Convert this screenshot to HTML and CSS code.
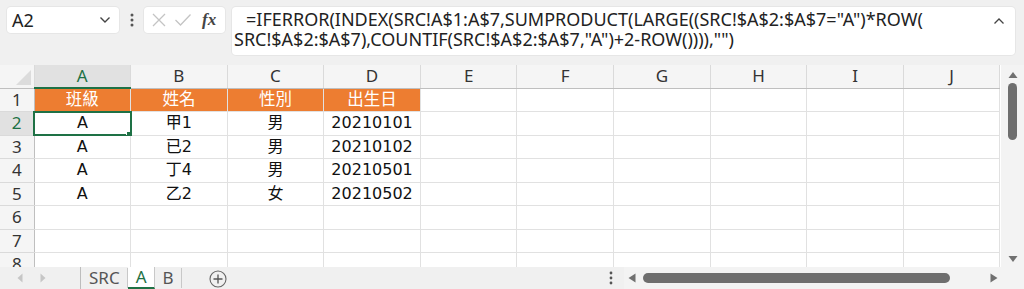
FILE: index.html
```html
<!DOCTYPE html>
<html lang="zh-Hant">
<head>
    <meta charset="UTF-8">
    <meta name="viewport" content="width=device-width, initial-scale=1.0">
    <title>Excel - A</title>
    <link rel="stylesheet" href="styles.css">
</head>
<body>
    <div class="toolbar">
        <div class="namebox">
            <span>A2</span>
            <svg width="12" height="8" viewBox="0 0 12 8"><path d="M1.5 1.5 L6 6 L10.5 1.5" fill="none" stroke="#444" stroke-width="1.4"/></svg>
        </div>
        <div class="grip">
            <svg width="4" height="14" viewBox="0 0 4 14"><circle cx="2" cy="2" r="1.5" fill="#555"/><circle cx="2" cy="7" r="1.5" fill="#555"/><circle cx="2" cy="12" r="1.5" fill="#555"/></svg>
        </div>
        <div class="fxbox">
            <svg width="16" height="16" viewBox="0 0 16 16"><path d="M2 2 L14 14 M14 2 L2 14" stroke="#c4c4c4" stroke-width="1.3"/></svg>
            <svg width="18" height="16" viewBox="0 0 18 16"><path d="M1.5 8 L6.5 13 L16.5 2.5" fill="none" stroke="#c4c4c4" stroke-width="1.3"/></svg>
            <span class="fx">fx</span>
        </div>
        <div class="formula">
            <div class="ftext"><span class="first">=IFERROR(INDEX(SRC!A$1:A$7,SUMPRODUCT(LARGE((SRC!$A$2:$A$7="A")*ROW(</span><br>SRC!$A$2:$A$7),COUNTIF(SRC!$A$2:$A$7,"A")+2-ROW()))),"")</div>
            <svg class="collapse" width="12" height="8" viewBox="0 0 12 8"><path d="M1.5 6.5 L6 2 L10.5 6.5" fill="none" stroke="#444" stroke-width="1.3"/></svg>
        </div>
    </div>

    <div class="sheet">
        <div class="gridwrap">
            <table class="grid">
                <colgroup>
                    <col class="rh"><col><col><col><col><col><col><col><col><col><col>
                </colgroup>
                <tr class="colhead">
                    <th class="corner"><span class="tri"></span></th>
                    <th class="on">A</th><th>B</th><th>C</th><th>D</th><th>E</th>
                    <th>F</th><th>G</th><th>H</th><th>I</th><th>J</th>
                </tr>
                <tr>
                    <th class="num">1</th>
                    <td class="head">班級</td><td class="head">姓名</td><td class="head">性別</td><td class="head">出生日</td>
                    <td></td><td></td><td></td><td></td><td></td><td></td>
                </tr>
                <tr>
                    <th class="num on">2</th>
                    <td class="sel">A</td><td>甲1</td><td>男</td><td>20210101</td>
                    <td></td><td></td><td></td><td></td><td></td><td></td>
                </tr>
                <tr>
                    <th class="num">3</th>
                    <td>A</td><td>已2</td><td>男</td><td>20210102</td>
                    <td></td><td></td><td></td><td></td><td></td><td></td>
                </tr>
                <tr>
                    <th class="num">4</th>
                    <td>A</td><td>丁4</td><td>男</td><td>20210501</td>
                    <td></td><td></td><td></td><td></td><td></td><td></td>
                </tr>
                <tr>
                    <th class="num">5</th>
                    <td>A</td><td>乙2</td><td>女</td><td>20210502</td>
                    <td></td><td></td><td></td><td></td><td></td><td></td>
                </tr>
                <tr>
                    <th class="num">6</th>
                    <td></td><td></td><td></td><td></td><td></td><td></td><td></td><td></td><td></td><td></td>
                </tr>
                <tr>
                    <th class="num">7</th>
                    <td></td><td></td><td></td><td></td><td></td><td></td><td></td><td></td><td></td><td></td>
                </tr>
                <tr>
                    <th class="num">8</th>
                    <td></td><td></td><td></td><td></td><td></td><td></td><td></td><td></td><td></td><td></td>
                </tr>
            </table>
        </div>
        <div class="vscroll">
            <svg width="10" height="8" viewBox="0 0 10 8"><path d="M5 1 L9.5 7 L0.5 7 Z" fill="#707070"/></svg>
            <div class="vthumb"></div>
            <div class="spacer"></div>
            <svg width="10" height="8" viewBox="0 0 10 8"><path d="M0.5 1 L9.5 1 L5 7 Z" fill="#707070"/></svg>
        </div>
    </div>

    <div class="tabbar">
        <div class="nav">
            <svg width="6" height="10" viewBox="0 0 6 10"><path d="M5.5 0.5 L0.5 5 L5.5 9.5 Z" fill="#c6c6c6"/></svg>
            <svg width="6" height="10" viewBox="0 0 6 10"><path d="M0.5 0.5 L5.5 5 L0.5 9.5 Z" fill="#c6c6c6"/></svg>
        </div>
        <div class="tabs">
            <div class="tab">SRC</div>
            <div class="tab active">A</div>
            <div class="tab">B</div>
        </div>
        <div class="addsheet">
            <svg width="18" height="18" viewBox="0 0 18 18"><circle cx="9" cy="9" r="8" fill="none" stroke="#666" stroke-width="1.1"/><path d="M9 4.5 V13.5 M4.5 9 H13.5" stroke="#555" stroke-width="1.3"/></svg>
        </div>
        <div class="hscroll">
            <svg class="hgrip" width="4" height="14" viewBox="0 0 4 14"><circle cx="2" cy="2" r="1.4" fill="#555"/><circle cx="2" cy="7" r="1.4" fill="#555"/><circle cx="2" cy="12" r="1.4" fill="#555"/></svg>
            <div class="htrack">
                <svg width="8" height="10" viewBox="0 0 8 10"><path d="M7.5 0.5 L0.5 5 L7.5 9.5 Z" fill="#707070"/></svg>
                <div class="hthumb"></div>
                <div class="spacer"></div>
                <svg width="8" height="10" viewBox="0 0 8 10"><path d="M0.5 0.5 L7.5 5 L0.5 9.5 Z" fill="#707070"/></svg>
            </div>
        </div>
    </div>
</body>
</html>
```

FILE: styles.css
```css
body {
    margin: 0;
    width: 1024px;
    height: 289px;
    overflow: hidden;
    background-color: #f0f0f0;
    font-family: "Noto Sans", "Noto Sans CJK TC", sans-serif;
    color: #222;
}
.toolbar {
    display: flex;
    align-items: flex-start;
    height: 65px;
    padding: 7px 9px 0 7px;
    box-sizing: border-box;
}
.namebox {
    width: 112px;
    height: 26px;
    box-sizing: border-box;
    background-color: #fff;
    border-radius: 4px;
    box-shadow: 0 0 0 1px #e6e6e6;
    display: flex;
    align-items: center;
    justify-content: space-between;
    padding: 0 8px 0 5px;
    font-size: 18px;
    color: #222;
}
.grip {
    width: 25px;
    height: 26px;
    display: flex;
    align-items: center;
    justify-content: center;
}
.fxbox {
    width: 81px;
    height: 26px;
    box-sizing: border-box;
    background-color: #fff;
    border-radius: 4px;
    box-shadow: 0 0 0 1px #e6e6e6;
    display: flex;
    align-items: center;
    gap: 7px;
    padding-left: 7px;
}
.fx {
    font-family: "Liberation Serif", "DejaVu Serif", serif;
    font-style: italic;
    font-weight: bold;
    font-size: 17px;
    color: #444;
    margin-left: 3px;
}
.formula {
    flex: 1;
    margin-left: 7px;
    height: 48px;
    box-sizing: border-box;
    background-color: #fff;
    border-radius: 4px;
    box-shadow: 0 0 0 1px #e6e6e6;
    display: flex;
    justify-content: space-between;
    padding: 2px 10px 0 2px;
}
.ftext {
    font-size: 18px;
    line-height: 20px;
    color: #222;
    white-space: nowrap;
}
.ftext .first {
    padding-left: 12px;
}
.collapse {
    margin-top: 8px;
}
.sheet {
    display: flex;
    height: 202px;
}
.gridwrap {
    width: 1001px;
    height: 202px;
    overflow: hidden;
    background-color: #fff;
}
.grid {
    width: 1000px;
    table-layout: fixed;
    border-collapse: collapse;
    font-family: "DejaVu Sans", "Noto Sans CJK TC", sans-serif;
    font-size: 16px;
    line-height: 18px;
}
.grid col {
    width: 96.6px;
}
.grid col.rh {
    width: 34px;
}
.grid tr {
    height: 23.5px;
}
.grid tr.colhead {
    height: 23px;
}
.grid td {
    padding: 0;
    text-align: center;
    border-right: 1px solid #e1e1e1;
    border-bottom: 1px solid #e1e1e1;
    color: #111;
    white-space: nowrap;
    overflow: hidden;
}
.grid th {
    padding: 0;
    font-weight: normal;
    font-family: "Noto Sans", sans-serif;
    font-size: 17px;
    line-height: 18px;
    color: #333;
    background-color: #f5f5f5;
    border-right: 1px solid #dadada;
    border-bottom: 1px solid #dadada;
}
.colhead th {
    border-bottom: 1px solid #bfbfbf;
}
.grid th.num {
    text-align: center;
    border-right: 1px solid #bfbfbf;
}
.grid th.on {
    background-color: #e1e1e1;
    color: #1e7145;
}
.colhead th.on {
    border-bottom: 2px solid #1e7145;
}
.grid th.num.on {
    border-right: 2px solid #1e7145;
}
.corner {
    position: relative;
}
.tri {
    position: absolute;
    right: 3px;
    bottom: 3px;
    width: 0;
    height: 0;
    border-left: 15px solid transparent;
    border-bottom: 15px solid #dcdcdc;
}
.grid td.head {
    background-color: #ed7d31;
    color: #fff;
    font-size: 16.5px;
}
.grid td.sel {
    position: relative;
    outline: 2px solid #1e7145;
    outline-offset: -1px;
}
.grid td.sel::after {
    content: "";
    position: absolute;
    right: -3px;
    bottom: -3px;
    width: 5px;
    height: 5px;
    background-color: #1e7145;
    border: 1px solid #fff;
}
.vscroll {
    width: 23px;
    height: 202px;
    box-sizing: border-box;
    display: flex;
    flex-direction: column;
    align-items: center;
    padding: 6px 0 4px;
    background-color: #f3f3f3;
}
.vthumb {
    width: 9px;
    height: 57px;
    margin-top: 4px;
    border-radius: 5px;
    background-color: #6e6e6e;
}
.spacer {
    flex: 1;
}
.tabbar {
    display: flex;
    align-items: center;
    height: 22px;
}
.nav {
    width: 80px;
    display: flex;
    gap: 17px;
    padding-left: 17px;
    box-sizing: border-box;
}
.tabs {
    display: flex;
    height: 22px;
    border-left: 1px solid #bdbdbd;
}
.tab {
    padding: 0 7px 0 8px;
    font-size: 17px;
    line-height: 20px;
    color: #555;
    border-right: 1px solid #c8c8c8;
    height: 20px;
    margin-top: 1px;
}
.tab.active {
    background-color: #fff;
    color: #1e7145;
    border-bottom: 2px solid #1e7145;
    margin-top: 0;
}
.addsheet {
    margin-left: 27px;
    display: flex;
    width: 20px;
    padding-top: 1px;
}
.hscroll {
    margin-left: auto;
    width: 419px;
    box-sizing: border-box;
    padding-left: 4px;
    display: flex;
    align-items: center;
    height: 22px;
}
.hgrip {
    margin-right: 11px;
}
.htrack {
    flex: 1;
    display: flex;
    align-items: center;
    height: 22px;
    padding: 0 26px 0 4px;
    background-color: #f3f3f3;
}
.hthumb {
    width: 307px;
    height: 10px;
    margin-left: 7px;
    border-radius: 5px;
    background-color: #6e6e6e;
}
```
